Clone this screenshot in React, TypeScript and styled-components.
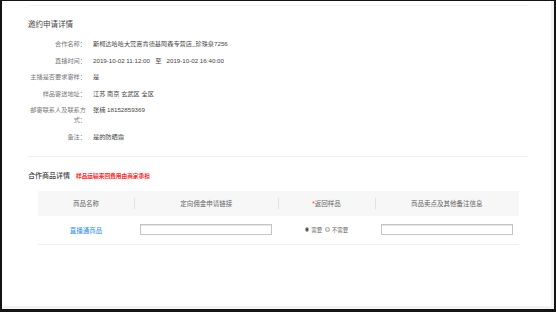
import styled, { createGlobalStyle } from 'styled-components';

const GlobalStyle = createGlobalStyle`
  html, body {
    margin: 0;
    padding: 0;
    background: #fff;
  }
  body {
    font-family: "Liberation Sans", "Noto Sans CJK SC", sans-serif;
  }
`;

interface InfoItem {
  label: string;
  value: string;
}

const infoRows: InfoItem[] = [
  { label: '合作名称：', value: '斯柯达哈哈大赏嘉肯德基阿森专营店_珍珠泉7256' },
  { label: '直播时间：', value: '2019-10-02 11:12:00\u00a0\u00a0\u00a0至\u00a0\u00a0\u00a02019-10-02 16:40:00' },
  { label: '主播是否要求寄样：', value: '是' },
  { label: '样品寄送地址：', value: '江苏 南京 玄武区 全区' },
  { label: '邮寄联系人及联系方式：', value: '张楠 18152859369' },
  { label: '备注：', value: '是的防晒霜' },
];

const App = () => {
  return (
    <>
      <GlobalStyle />
      <Frame>
        <Panel>
          <TopRule />
          <Title>邀约申请详情</Title>
          <InfoList>
            {infoRows.map((row) => (
              <InfoRow key={row.label}>
                <Label>{row.label}</Label>
                <Value>{row.value}</Value>
              </InfoRow>
            ))}
          </InfoList>
          <Divider />
          <SectionHead>
            <SectionTitle>合作商品详情</SectionTitle>
            <Notice>样品运输来回费用由商家承担</Notice>
          </SectionHead>
          <Table>
            <colgroup>
              <col style={{ width: '20%' }} />
              <col style={{ width: '30%' }} />
              <col style={{ width: '20%' }} />
              <col style={{ width: '30%' }} />
            </colgroup>
            <thead>
              <tr>
                <Th>商品名称</Th>
                <Th>定向佣金申请链接</Th>
                <Th><Star>*</Star>返回样品</Th>
                <Th>商品卖点及其他备注信息</Th>
              </tr>
            </thead>
            <tbody>
              <tr>
                <Td><GoodsLink>直播通商品</GoodsLink></Td>
                <Td $pad><TextInput type="text" /></Td>
                <Td>
                  <RadioGroup>
                    <RadioOption><Radio $checked />需要</RadioOption>
                    <RadioOption><Radio />不需要</RadioOption>
                  </RadioGroup>
                </Td>
                <Td $pad><TextInput type="text" /></Td>
              </tr>
            </tbody>
          </Table>
        </Panel>
      </Frame>
    </>
  );
};

export default App;

const Frame = styled.div`
  width: 556px;
  height: 312px;
  box-sizing: border-box;
  border-style: solid;
  border-color: #141414;
  border-width: 1px 2px 3px 2px;
  background: #f3f3f3;
  padding: 0 3px 3px 0;
`;

const Panel = styled.div`
  height: 100%;
  box-sizing: border-box;
  background: #fff;
  padding: 4px 23px 0 26px;
`;

const TopRule = styled.div`
  height: 1px;
  background: #f4f4f4;
`;

const Title = styled.div`
  margin-top: 14px;
  font-size: 7.5px;
  line-height: 10px;
  color: #444;
`;

const InfoList = styled.div`
  margin-top: 9px;
  display: flex;
  flex-direction: column;
  gap: 6.5px;
`;

const InfoRow = styled.div`
  display: flex;
  font-size: 6.2px;
  line-height: 10px;
`;

const Label = styled.div`
  width: 58px;
  flex-shrink: 0;
  text-align: right;
  color: #777;
`;

const Value = styled.div`
  margin-left: 7px;
  color: #444;
`;

const Divider = styled.div`
  margin-top: 14px;
  height: 1px;
  background: #f0f0f0;
`;

const SectionHead = styled.div`
  margin-top: 14px;
  display: flex;
  align-items: center;
  gap: 6px;
  line-height: 10px;
`;

const SectionTitle = styled.div`
  font-size: 7px;
  color: #444;
  font-weight: 500;
`;

const Notice = styled.div`
  font-size: 5.7px;
  font-weight: 700;
  color: #ff2a2a;
`;

const Table = styled.table`
  margin: 10px 0 0 10px;
  width: 481px;
  border-collapse: collapse;
  table-layout: fixed;
`;

const Th = styled.th`
  position: relative;
  height: 25px;
  padding: 0;
  background: #f7f7f7;
  font-size: 6.5px;
  font-weight: 400;
  color: #666;
  text-align: center;

  & + &::before {
    content: '';
    position: absolute;
    left: 0;
    top: 7px;
    width: 1px;
    height: 11px;
    background: #e2e2e2;
  }
`;

const Star = styled.span`
  color: #ff3030;
`;

const Td = styled.td<{ $pad?: boolean }>`
  height: 28px;
  padding: ${(p) => (p.$pad ? '0 6px' : '0')};
  border-bottom: 1px solid #efefef;
  text-align: center;
  font-size: 6.5px;
`;

const GoodsLink = styled.span`
  color: #2b8ef0;
`;

const TextInput = styled.input`
  display: block;
  width: 100%;
  height: 11px;
  box-sizing: border-box;
  margin: 0;
  padding: 0;
  border: 1px solid #c4c4c4;
  box-shadow: inset 0 1px 0 #e6e6e6;
  background: #fff;
  outline: none;
`;

const RadioGroup = styled.div`
  display: inline-flex;
  align-items: center;
  gap: 3px;
`;

const RadioOption = styled.span`
  display: inline-flex;
  align-items: center;
  gap: 2px;
  font-size: 5.5px;
  color: #666;
`;

const Radio = styled.span<{ $checked?: boolean }>`
  width: 4.5px;
  height: 4.5px;
  box-sizing: border-box;
  border-radius: 50%;
  border: 0.8px solid #aaa;
  background: ${(p) => (p.$checked ? 'radial-gradient(circle, #444 0 1.1px, #eee 1.3px)' : 'linear-gradient(#f6f6f6, #dcdcdc)')};
`;
